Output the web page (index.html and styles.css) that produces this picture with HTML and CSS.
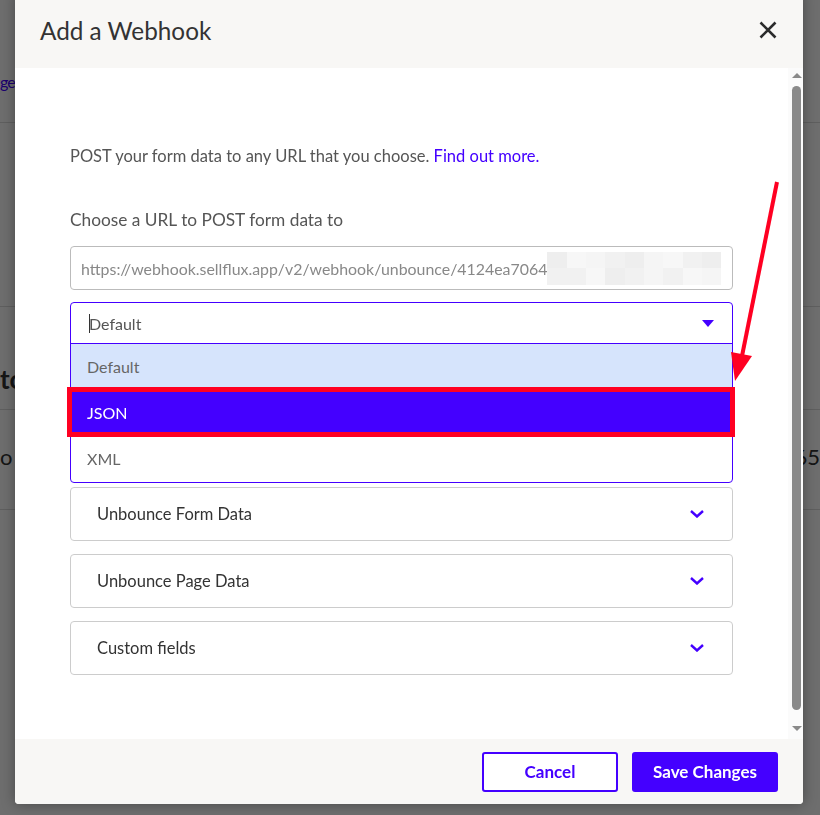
FILE: index.html
```html
<!DOCTYPE html>
<html lang="en">
<head>
  <meta charset="UTF-8">
  <meta name="viewport" content="width=device-width, initial-scale=1.0">
  <title>Add a Webhook</title>
  <link rel="stylesheet" href="styles.css">
</head>
<body>
  <div class="page">
    <div class="page-row row-top"><a class="page-link">ges</a></div>
    <div class="page-row row-mid"></div>
    <div class="page-row row-title"><span class="page-heading">to</span></div>
    <div class="page-row row-data"><span class="page-cell">o</span><span class="page-num">65</span></div>
  </div>

  <div class="overlay"></div>

  <div class="modal">
    <div class="modal-header">
      <h2>Add a Webhook</h2>
      <button class="close-btn" aria-label="Close">
        <svg width="18" height="18" viewBox="0 0 18 18"><path d="M1.5 1.5 L16.5 16.5 M16.5 1.5 L1.5 16.5" stroke="#2b2b2b" stroke-width="2.6" fill="none"/></svg>
      </button>
    </div>

    <div class="modal-body">
      <div class="modal-content">
        <p class="intro">POST your form data to any URL that you choose. <a href="#">Find out more.</a></p>
        <label class="field-label">Choose a URL to POST form data to</label>
        <div class="url-input">
          <span class="url-text">https://webhook.sellflux.app/v2/webhook/unbounce/4124ea7064</span>
          <span class="blur">
            <i></i><i></i><i></i><i></i><i></i><i></i><i></i><i></i><i></i>
            <i></i><i></i><i></i><i></i><i></i><i></i><i></i><i></i><i></i>
          </span>
        </div>

        <div class="select">
          <div class="select-head">
            <span class="select-value"><span class="caret"></span>Default</span>
            <svg width="12" height="7" viewBox="0 0 12 7"><path d="M0 0 H12 L6 7 Z" fill="#4400ff"/></svg>
          </div>
          <div class="option option-hover">Default</div>
          <div class="option option-selected">JSON</div>
          <div class="option">XML</div>
        </div>

        <div class="accordion">
          <span>Unbounce Form Data</span>
          <svg class="chevron" width="14" height="8" viewBox="0 0 14 8"><path d="M1 1 L7 6.5 L13 1" stroke="#4400ff" stroke-width="2.4" fill="none"/></svg>
        </div>
        <div class="accordion">
          <span>Unbounce Page Data</span>
          <svg class="chevron" width="14" height="8" viewBox="0 0 14 8"><path d="M1 1 L7 6.5 L13 1" stroke="#4400ff" stroke-width="2.4" fill="none"/></svg>
        </div>
        <div class="accordion">
          <span>Custom fields</span>
          <svg class="chevron" width="14" height="8" viewBox="0 0 14 8"><path d="M1 1 L7 6.5 L13 1" stroke="#4400ff" stroke-width="2.4" fill="none"/></svg>
        </div>
      </div>

      <div class="scrollbar">
        <span class="scroll-arrow up"></span>
        <span class="scroll-thumb"></span>
        <span class="scroll-arrow down"></span>
      </div>
    </div>

    <div class="modal-footer">
      <button class="btn btn-outline">Cancel</button>
      <button class="btn btn-primary">Save Changes</button>
    </div>
  </div>

  <!-- annotation arrow -->
  <svg class="annotation" width="820" height="815" viewBox="0 0 820 815">
    <line x1="777" y1="182" x2="742" y2="356" stroke="#ff0022" stroke-width="4"/>
    <polygon points="731,352 752,356 735,381" fill="#ff0022"/>
  </svg>
</body>
</html>
```

FILE: styles.css
```css
* {
  margin: 0;
  padding: 0;
  box-sizing: border-box;
}

body {
  font-family: Lato, "Liberation Sans", sans-serif;
  width: 820px;
  height: 815px;
  overflow: hidden;
  background-color: #fff;
  color: #333;
}

/* page behind the modal */
.page {
  width: 820px;
}

.page-row {
  border-bottom: 1px solid #dcdcdc;
}

.row-top {
  height: 123px;
  padding-top: 72px;
}

.page-link {
  display: block;
  font-size: 16px;
  letter-spacing: -1px;
  color: #4400ff;
}

.row-mid {
  height: 184px;
}

.row-title {
  height: 103px;
  padding-top: 56px;
}

.page-heading {
  display: block;
  font-size: 26px;
  font-weight: bold;
  color: #333;
}

.row-data {
  height: 100px;
  display: flex;
  justify-content: space-between;
  align-items: center;
  padding: 0 0 6px 0;
  font-size: 22px;
  color: #333;
}

.overlay {
  position: fixed;
  inset: 0;
  background-color: rgba(0, 0, 0, 0.57);
}

/* modal */
.modal {
  position: absolute;
  left: 15px;
  top: -8px;
  width: 788px;
  background-color: #fff;
  border-radius: 4px;
  box-shadow: 0 0 14px rgba(0, 0, 0, 0.35);
}

.modal-header {
  height: 76px;
  padding: 0 26px 0 25px;
  display: flex;
  justify-content: space-between;
  align-items: center;
  background-color: #f8f7f5;
  border-radius: 4px 4px 0 0;
}

.modal-header h2 {
  font-size: 24.3px;
  font-weight: normal;
  color: #333;
}

.close-btn {
  background: none;
  border: none;
  display: flex;
}

.modal-body {
  height: 671px;
  display: flex;
}

.modal-content {
  flex: 1;
  min-width: 0;
  padding: 76px 55px 0 55px;
}

.intro {
  font-size: 16.5px;
  line-height: 24px;
  color: #555;
  margin-bottom: 40px;
}

.intro a {
  color: #4400ff;
  text-decoration: none;
}

.field-label {
  display: block;
  font-size: 17.3px;
  line-height: 24px;
  color: #555;
  margin-bottom: 14px;
}

.url-input {
  height: 44px;
  border: 1px solid #bbb;
  border-radius: 4px;
  padding: 0 10px;
  display: flex;
  align-items: center;
  font-size: 15.9px;
  color: #888;
  overflow: hidden;
  white-space: nowrap;
}

.blur {
  flex-shrink: 0;
  display: grid;
  grid-template-columns: repeat(9, 1fr);
  width: 174px;
  height: 33px;
}

.blur i {
  background-color: #f1f1f1;
}

.blur i:nth-child(3n) {
  background-color: #f5f5f5;
}

.blur i:nth-child(4n+1) {
  background-color: #eeeeee;
}

.blur i:nth-child(5n+2) {
  background-color: #f7f7f7;
}

/* dropdown */
.select {
  margin-top: 12px;
  border: 1px solid #4400ff;
  border-radius: 4px;
}

.select-head {
  height: 41px;
  padding: 0 18px;
  display: flex;
  justify-content: space-between;
  align-items: center;
  border-bottom: 1px solid #4400ff;
  font-size: 16px;
  color: #555;
}

.select-value {
  display: flex;
  align-items: center;
}

.caret {
  display: inline-block;
  width: 1px;
  height: 19px;
  margin-right: -1px;
  background-color: #333;
}

.option {
  position: relative;
  height: 46px;
  padding: 0 0 2px 16px;
  display: flex;
  align-items: center;
  font-size: 16px;
  color: #666;
}

.option-hover {
  background-color: #d6e4fc;
}

.option-selected {
  background-color: #4400ff;
  color: #fff;
}

.option-selected::after {
  content: "";
  position: absolute;
  top: -3px;
  bottom: -1px;
  left: -4px;
  right: -3px;
  border: 5px solid #ff0022;
}

/* accordions */
.accordion {
  height: 54px;
  margin-top: 13px;
  padding: 0 28px 0 26px;
  border: 1px solid #ccc;
  border-radius: 4px;
  display: flex;
  justify-content: space-between;
  align-items: center;
  font-size: 16.5px;
  color: #333;
}

.select + .accordion {
  margin-top: 4px;
}

/* scrollbar */
.scrollbar {
  flex-shrink: 0;
  width: 15px;
  background-color: #fbfbfb;
  display: flex;
  flex-direction: column;
  align-items: center;
  padding: 5px 0 0 2px;
}

.scroll-arrow {
  width: 0;
  height: 0;
  border-left: 5px solid transparent;
  border-right: 5px solid transparent;
}

.scroll-arrow.up {
  border-bottom: 5px solid #8a8a8a;
}

.scroll-arrow.down {
  border-top: 5px solid #8a8a8a;
  margin-top: 16px;
}

.scroll-thumb {
  width: 9px;
  height: 624px;
  margin-top: 8px;
  border-radius: 5px;
  background-color: #8a8a8a;
}

/* footer */
.modal-footer {
  height: 65px;
  padding-right: 25px;
  display: flex;
  justify-content: flex-end;
  align-items: center;
  gap: 14px;
  background-color: #f8f7f5;
  border-radius: 0 0 4px 4px;
}

.btn {
  height: 40px;
  font-family: inherit;
  font-size: 17px;
  font-weight: bold;
  border-radius: 3px;
  cursor: pointer;
}

.btn-outline {
  width: 136px;
  background-color: #fff;
  color: #4400ff;
  border: 2px solid #4400ff;
}

.btn-primary {
  width: 146px;
  background-color: #4400ff;
  color: #fff;
  border: none;
}

.annotation {
  position: fixed;
  left: 0;
  top: 0;
  pointer-events: none;
}
```
